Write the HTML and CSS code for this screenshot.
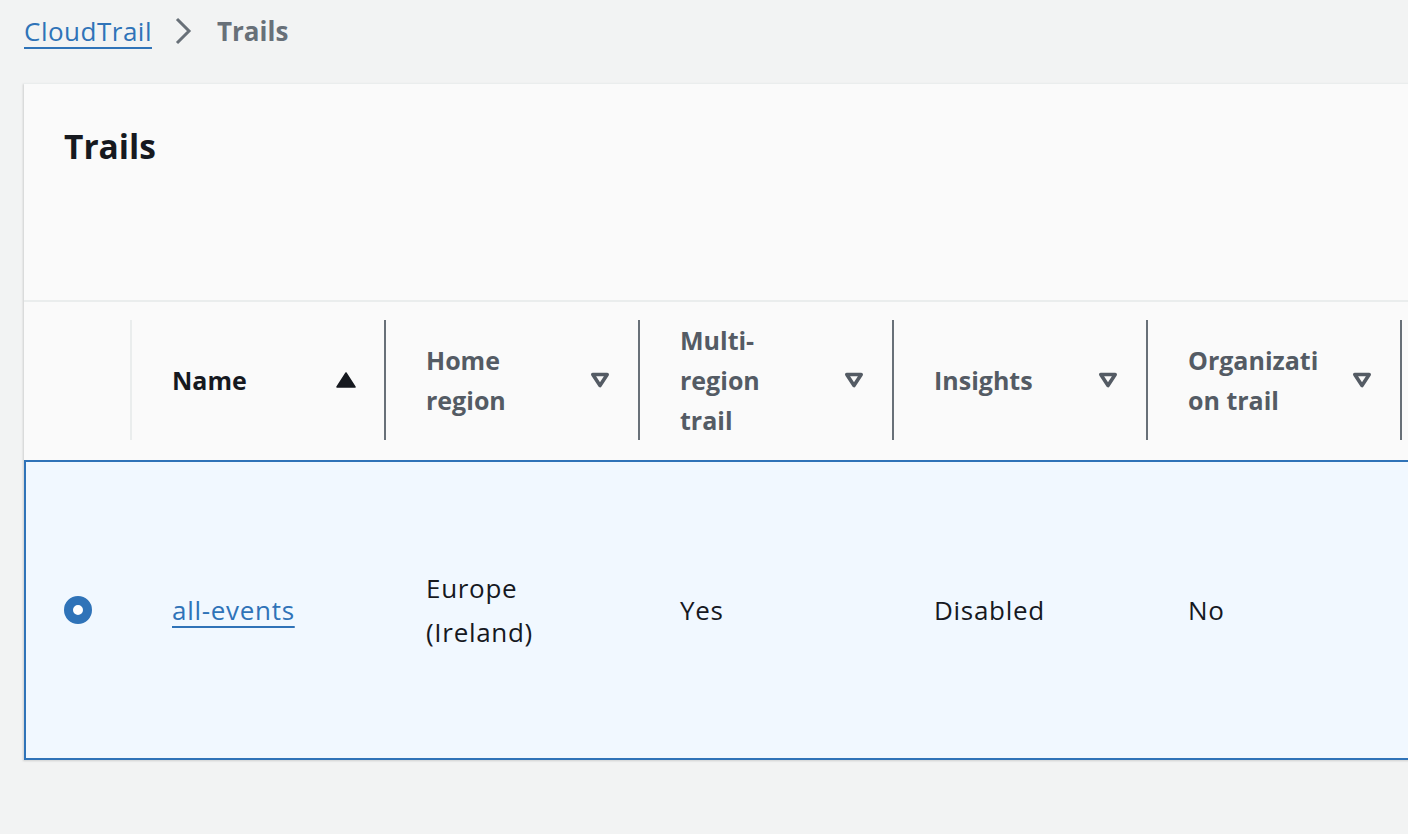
FILE: index.html
```html
<!DOCTYPE html>
<html lang="en">
<head>
<meta charset="utf-8">
<title>Trails | CloudTrail</title>
<link rel="stylesheet" href="styles.css">
</head>
<body>
<nav class="breadcrumbs">
  <a class="crumb-link" href="#">CloudTrail</a>
  <svg class="crumb-sep" width="18" height="28" viewBox="0 0 18 28" aria-hidden="true"><polyline points="3,2 15,14 3,26" fill="none" stroke="#687078" stroke-width="3"/></svg>
  <span class="crumb-current">Trails</span>
</nav>
<main class="card">
  <header class="card-header">
    <h1 class="card-title">Trails</h1>
  </header>
  <table class="trails">
    <thead>
      <tr>
        <th class="col-select"><div class="th-inner th-first"></div></th>
        <th><div class="th-inner sorted"><span class="th-label">Name</span>
          <svg class="sort-icon" width="20" height="16" viewBox="0 0 20 16"><path d="M10 1 L19 15 L1 15 Z" fill="#16191f" stroke="#16191f" stroke-width="1.5" stroke-linejoin="round"/></svg></div></th>
        <th><div class="th-inner"><span class="th-label">Home<br>region</span>
          <svg class="sort-icon" width="20" height="16" viewBox="0 0 20 16"><path d="M2.8 2.5 L17.2 2.5 L10 13.5 Z" fill="none" stroke="#545b64" stroke-width="3.6" stroke-linejoin="round"/></svg></div></th>
        <th><div class="th-inner"><span class="th-label">Multi-<br>region<br>trail</span>
          <svg class="sort-icon" width="20" height="16" viewBox="0 0 20 16"><path d="M2.8 2.5 L17.2 2.5 L10 13.5 Z" fill="none" stroke="#545b64" stroke-width="3.6" stroke-linejoin="round"/></svg></div></th>
        <th><div class="th-inner"><span class="th-label">Insights</span>
          <svg class="sort-icon" width="20" height="16" viewBox="0 0 20 16"><path d="M2.8 2.5 L17.2 2.5 L10 13.5 Z" fill="none" stroke="#545b64" stroke-width="3.6" stroke-linejoin="round"/></svg></div></th>
        <th><div class="th-inner"><span class="th-label">Organizati<br>on trail</span>
          <svg class="sort-icon" width="20" height="16" viewBox="0 0 20 16"><path d="M2.8 2.5 L17.2 2.5 L10 13.5 Z" fill="none" stroke="#545b64" stroke-width="3.6" stroke-linejoin="round"/></svg></div></th>
        <th><div class="th-inner th-empty"></div></th>
      </tr>
    </thead>
    <tbody>
      <tr class="selected">
        <td class="col-select"><span class="radio"></span></td>
        <td><a class="trail-link" href="#">all-events</a></td>
        <td>Europe<br>(Ireland)</td>
        <td>Yes</td>
        <td>Disabled</td>
        <td>No</td>
        <td></td>
      </tr>
    </tbody>
  </table>
</main>
</body>
</html>
```
FILE: styles.css
```css
html, body {
  margin: 0;
  padding: 0;
  overflow: hidden;
}
body {
  background: #f2f3f3;
  font-family: "Open Sans", "Noto Sans", sans-serif;
  color: #16191f;
  width: 1408px;
  height: 834px;
}
.breadcrumbs {
  display: flex;
  align-items: center;
  height: 62px;
  padding: 0 24px;
}
.crumb-link {
  color: #2f73b8;
  font-size: 26px;
  letter-spacing: 0.5px;
  text-decoration: underline;
  text-decoration-thickness: 2px;
  text-underline-offset: 6px;
}
.crumb-sep {
  margin: 0 25px 0 22px;
}
.crumb-current {
  color: #687078;
  font-size: 26px;
  font-weight: 700;
}
.card {
  margin-left: 24px;
  margin-top: 21px;
  width: 1500px;
  background: #fafafa;
  border-top: 1px solid #eaeded;
  box-shadow: -1px 1px 2px rgba(0,0,0,0.15);
}
.card-header {
  height: 218px;
  padding: 0 40px;
  box-sizing: border-box;
  border-bottom: 2px solid #eaeded;
}
.card-title {
  margin: 0;
  padding-top: 38px;
  font-size: 33.5px;
  line-height: 48px;
  font-weight: 700;
  color: #16191f;
}
.trails {
  border-collapse: collapse;
  table-layout: fixed;
  width: 1631px;
}
.trails th {
  width: 254px;
  padding: 18px 0 20px;
  text-align: left;
  vertical-align: middle;
  font-weight: 700;
  font-size: 25px;
  line-height: 40px;
  color: #545b64;
}
.trails th.col-select {
  width: 107px;
}
.th-inner {
  display: flex;
  align-items: center;
  justify-content: space-between;
  height: 120px;
  padding: 0 28px 0 40px;
  border-right: 2px solid #687078;
}
.th-inner.th-first {
  border-right-color: #eaeded;
  padding: 0;
}
.th-inner.sorted {
  color: #16191f;
}
.sort-icon {
  flex: none;
}
.trails tbody td {
  height: 296px;
  padding: 0 40px 0 40px;
  font-size: 26px;
  letter-spacing: 0.7px;
  line-height: 44px;
  color: #16191f;
  vertical-align: middle;
}
.trails tbody td.col-select {
  padding: 0 0 0 38px;
}
.selected td {
  background: #f1f8ff;
  border-top: 2px solid #2f73b8;
  border-bottom: 2px solid #2f73b8;
}
.selected td:first-child {
  border-left: 2px solid #2f73b8;
}
.radio {
  display: block;
  width: 28px;
  height: 28px;
  box-sizing: border-box;
  border-radius: 50%;
  border: 9px solid #2f73b8;
  background: #fff;
}
.trail-link {
  color: #2f73b8;
  text-decoration: underline;
  text-decoration-thickness: 2px;
  text-underline-offset: 6px;
}
```
